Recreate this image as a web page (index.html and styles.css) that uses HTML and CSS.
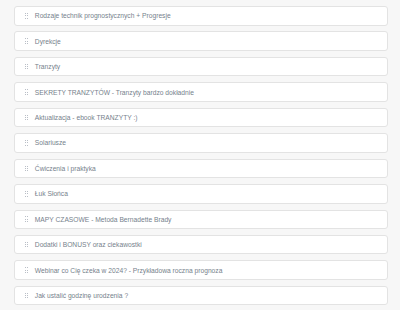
FILE: index.html
```html
<!DOCTYPE html>
<html lang="pl">
<head>
<meta charset="utf-8">
<link rel="stylesheet" href="styles.css">
</head>
<body>
<ul class="list">
  <li class="item"><span class="handle"><i></i><i></i><i></i><i></i><i></i><i></i></span><span class="label">Rodzaje technik prognostycznych + Progresje</span></li>
  <li class="item"><span class="handle"><i></i><i></i><i></i><i></i><i></i><i></i></span><span class="label">Dyrekcje</span></li>
  <li class="item"><span class="handle"><i></i><i></i><i></i><i></i><i></i><i></i></span><span class="label">Tranzyty</span></li>
  <li class="item"><span class="handle"><i></i><i></i><i></i><i></i><i></i><i></i></span><span class="label">SEKRETY TRANZYTÓW - Tranzyty bardzo dokładnie</span></li>
  <li class="item"><span class="handle"><i></i><i></i><i></i><i></i><i></i><i></i></span><span class="label">Aktualizacja - ebook TRANZYTY :)</span></li>
  <li class="item"><span class="handle"><i></i><i></i><i></i><i></i><i></i><i></i></span><span class="label">Solariusze</span></li>
  <li class="item"><span class="handle"><i></i><i></i><i></i><i></i><i></i><i></i></span><span class="label">Ćwiczenia i praktyka</span></li>
  <li class="item"><span class="handle"><i></i><i></i><i></i><i></i><i></i><i></i></span><span class="label">Łuk Słońca</span></li>
  <li class="item"><span class="handle"><i></i><i></i><i></i><i></i><i></i><i></i></span><span class="label">MAPY CZASOWE - Metoda Bernadette Brady</span></li>
  <li class="item"><span class="handle"><i></i><i></i><i></i><i></i><i></i><i></i></span><span class="label">Dodatki i BONUSY oraz ciekawostki</span></li>
  <li class="item"><span class="handle"><i></i><i></i><i></i><i></i><i></i><i></i></span><span class="label">Webinar co Cię czeka w 2024? - Przykładowa roczna prognoza</span></li>
  <li class="item"><span class="handle"><i></i><i></i><i></i><i></i><i></i><i></i></span><span class="label">Jak ustalić godzinę urodzenia ?</span></li>
</ul>
</body>
</html>
```
FILE: styles.css
```css
html, body {
  margin: 0;
  padding: 0;
  background: #f7f7f7;
}
body {
  font-family: "Liberation Sans", Arial, sans-serif;
  padding: 6px 12px 0 14.3px;
}
.list {
  list-style: none;
  margin: 0;
  padding: 0;
  display: flex;
  flex-direction: column;
  gap: 5.95px;
}
.item {
  box-sizing: border-box;
  height: 19.5px;
  background: #fff;
  border: 1px solid #e3e3e3;
  border-radius: 3px;
  display: flex;
  align-items: center;
  padding-left: 9.5px;
}
.handle {
  display: grid;
  grid-template-columns: 1px 1px;
  column-gap: 1.5px;
  row-gap: 1.3px;
  margin-right: 6.5px;
}
.handle i {
  width: 1px;
  height: 1px;
  background: #b9bec6;
}
.label {
  font-size: 6.7px;
  color: #767f8c;
  white-space: nowrap;
}
```
